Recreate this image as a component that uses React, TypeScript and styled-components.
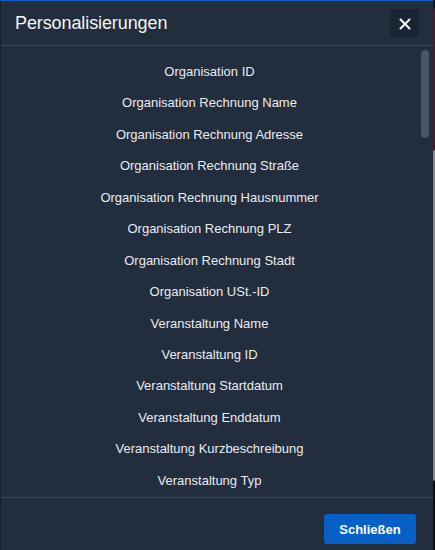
import React from "react";
import styled, { createGlobalStyle } from "styled-components";

const Global = createGlobalStyle`
  html, body { margin: 0; padding: 0; }
  body {
    width: 435px; height: 550px; overflow: hidden;
    background: linear-gradient(180deg, #1a1a1a 0px, #1a1a1a 8px, #5a1424 9px, #5a1424 150px, #8a8a8a 151px, #8a8a8a 480px, #111 481px);
    font-family: "Liberation Sans", Arial, sans-serif;
  }
`;

const Modal = styled.div`
  width: 433px;
  height: 550px;
  box-sizing: border-box;
  display: flex;
  flex-direction: column;
  background: #222d3e;
  border-top: 1px solid #0b5fc4;
  border-left: 1px solid #172030;
`;

const Header = styled.div`
  height: 44px;
  flex: 0 0 44px;
  display: flex;
  align-items: center;
  justify-content: space-between;
  padding: 0 14px 0 14px;
  border-bottom: 1px solid #3a4557;
`;

const Title = styled.h2`
  margin: 0;
  font-size: 18px;
  font-weight: 400;
  color: #f2f4f7;
  letter-spacing: -0.1px;
`;

const CloseButton = styled.button`
  width: 29px;
  height: 29px;
  border: none;
  border-radius: 4px;
  background: #1b2432;
  display: flex;
  align-items: center;
  justify-content: center;
  padding: 0;
  margin-top: 1px;
`;

const Body = styled.div`
  position: relative;
  flex: 1;
  overflow: hidden;
  padding: 10px 15px 0 0;
`;

const List = styled.ul`
  list-style: none;
  margin: 0;
  padding: 0;
  display: flex;
  flex-direction: column;
  align-items: center;
`;

const Item = styled.li`
  height: 31.45px;
  line-height: 31.45px;
  font-size: 13px;
  color: #e9ecf1;
  text-align: center;
`;

const Thumb = styled.div`
  position: absolute;
  right: 4px;
  top: 4px;
  width: 8px;
  height: 88px;
  border-radius: 4px;
  background: #4a5567;
`;

const Footer = styled.div`
  flex: 0 0 53px;
  box-sizing: border-box;
  border-top: 1px solid #3a4557;
  display: flex;
  justify-content: flex-end;
  align-items: flex-start;
  padding: 16px 17px 0 0;
`;

const PrimaryButton = styled.button`
  width: 92px;
  height: 30px;
  border: none;
  border-radius: 3px;
  background: #0760c5;
  color: #ffffff;
  font-family: "Liberation Sans", Arial, sans-serif;
  font-weight: 700;
  font-size: 13px;
  padding: 0;
`;

const items = [
  "Organisation ID",
  "Organisation Rechnung Name",
  "Organisation Rechnung Adresse",
  "Organisation Rechnung Straße",
  "Organisation Rechnung Hausnummer",
  "Organisation Rechnung PLZ",
  "Organisation Rechnung Stadt",
  "Organisation USt.-ID",
  "Veranstaltung Name",
  "Veranstaltung ID",
  "Veranstaltung Startdatum",
  "Veranstaltung Enddatum",
  "Veranstaltung Kurzbeschreibung",
  "Veranstaltung Typ",
];

export default function App() {
  return (
    <>
      <Global />
      <Modal>
        <Header>
          <Title>Personalisierungen</Title>
          <CloseButton aria-label="Schließen">
            <svg width="12" height="12" viewBox="0 0 12 12">
              <path d="M1.5 1.5 L10.5 10.5 M10.5 1.5 L1.5 10.5" stroke="#ffffff" strokeWidth="2" strokeLinecap="round" />
            </svg>
          </CloseButton>
        </Header>
        <Body>
          <List>
            {items.map((t) => (
              <Item key={t}>{t}</Item>
            ))}
          </List>
          <Thumb />
        </Body>
        <Footer>
          <PrimaryButton>Schließen</PrimaryButton>
        </Footer>
      </Modal>
    </>
  );
}
